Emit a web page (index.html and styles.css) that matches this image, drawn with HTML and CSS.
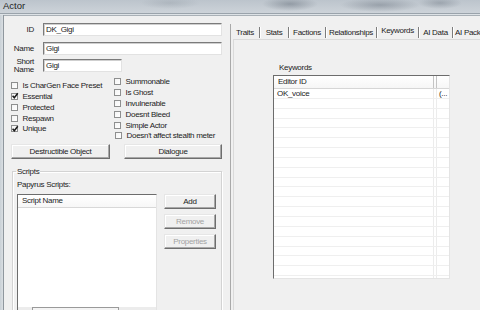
FILE: index.html
```html
<!DOCTYPE html>
<html>
<head>
<meta charset="utf-8">
<link rel="stylesheet" href="styles.css">
</head>
<body>
<div class="window">
  <div class="titlebar"><span class="title">Actor</span></div>
  <div class="frame">
    <div class="frame-edge"></div>
    <div class="client">
      <div class="left">
        <div class="field-row r-id"><span class="lbl">ID</span><div class="edit wide">DK_Gigi</div></div>
        <div class="field-row r-name"><span class="lbl">Name</span><div class="edit wide">Gigi</div></div>
        <div class="field-row r-short"><span class="lbl two">Short<br>Name</span><div class="edit short">Gigi</div></div>
        <div class="checks">
          <div class="col col-a">
            <div class="chk"><span class="box"></span>Is CharGen Face Preset</div>
            <div class="chk"><span class="box"><svg viewBox="0 0 5 5"><path d="M0.5 2.3 L1.9 3.9 L4.8 0.2"/></svg></span>Essential</div>
            <div class="chk"><span class="box"></span>Protected</div>
            <div class="chk"><span class="box"></span>Respawn</div>
            <div class="chk"><span class="box"><svg viewBox="0 0 5 5"><path d="M0.5 2.3 L1.9 3.9 L4.8 0.2"/></svg></span>Unique</div>
          </div>
          <div class="col col-b">
            <div class="chk"><span class="box"></span>Summonable</div>
            <div class="chk"><span class="box"></span>Is Ghost</div>
            <div class="chk"><span class="box"></span>Invulnerable</div>
            <div class="chk"><span class="box"></span>Doesnt Bleed</div>
            <div class="chk"><span class="box"></span>Simple Actor</div>
            <div class="chk shifted"><span class="box"></span>Doesn't affect stealth meter</div>
          </div>
        </div>
        <div class="btn-row">
          <div class="btn b-destr">Destructible Object</div>
          <div class="btn b-dialog">Dialogue</div>
        </div>
        <fieldset class="group">
          <legend>Scripts</legend>
          <div class="pap">Papyrus Scripts:</div>
          <div class="scripts">
            <div class="list slist">
              <div class="lhead"><span class="hcell">Script Name</span></div>
              <div class="lbody"></div>
              <div class="hscroll"><span class="arrow"></span><span class="thumb"></span></div>
            </div>
            <div class="sbtns">
              <div class="btn">Add</div>
              <div class="btn dis">Remove</div>
              <div class="btn dis">Properties</div>
            </div>
          </div>
        </fieldset>
      </div>
      <div class="right">
        <div class="tabctl">
          <div class="tabs">
            <span class="tab t-traits">Traits</span><span class="sep"></span>
            <span class="tab t-stats">Stats</span><span class="sep"></span>
            <span class="tab t-fac">Factions</span><span class="sep"></span>
            <span class="tab t-rel">Relationships</span><span class="sep"></span>
            <span class="tab t-kw active">Keywords</span><span class="sep"></span>
            <span class="tab t-ai">AI Data</span><span class="sep"></span>
            <span class="tab t-pack">AI Pack</span>
          </div>
          <div class="page">
            <div class="kw-label">Keywords</div>
            <div class="list kwlist">
              <div class="krow khead"><span class="c1">Editor ID</span><span class="c2"></span><span class="c3"></span></div>
              <div class="krow"><span class="c1">OK_voice</span><span class="c2"></span><span class="c3">(...</span></div>
              <div class="krow"><span class="c1"></span><span class="c2"></span><span class="c3"></span></div>
              <div class="krow"><span class="c1"></span><span class="c2"></span><span class="c3"></span></div>
              <div class="krow"><span class="c1"></span><span class="c2"></span><span class="c3"></span></div>
              <div class="krow"><span class="c1"></span><span class="c2"></span><span class="c3"></span></div>
              <div class="krow"><span class="c1"></span><span class="c2"></span><span class="c3"></span></div>
              <div class="krow"><span class="c1"></span><span class="c2"></span><span class="c3"></span></div>
              <div class="krow"><span class="c1"></span><span class="c2"></span><span class="c3"></span></div>
              <div class="krow"><span class="c1"></span><span class="c2"></span><span class="c3"></span></div>
              <div class="krow"><span class="c1"></span><span class="c2"></span><span class="c3"></span></div>
              <div class="krow"><span class="c1"></span><span class="c2"></span><span class="c3"></span></div>
              <div class="krow"><span class="c1"></span><span class="c2"></span><span class="c3"></span></div>
              <div class="krow"><span class="c1"></span><span class="c2"></span><span class="c3"></span></div>
              <div class="krow"><span class="c1"></span><span class="c2"></span><span class="c3"></span></div>
              <div class="krow"><span class="c1"></span><span class="c2"></span><span class="c3"></span></div>
              <div class="krow"><span class="c1"></span><span class="c2"></span><span class="c3"></span></div>
              <div class="krow"><span class="c1"></span><span class="c2"></span><span class="c3"></span></div>
              <div class="krow"><span class="c1"></span><span class="c2"></span><span class="c3"></span></div>
              <div class="krow"><span class="c1"></span><span class="c2"></span><span class="c3"></span></div>
              <div class="krow"><span class="c1"></span><span class="c2"></span><span class="c3"></span></div>
            </div>
          </div>
        </div>
      </div>
    </div>
  </div>
</div>
</body>
</html>
```

FILE: styles.css
```css
* { box-sizing: border-box; }
html, body { margin: 0; padding: 0; }
body {
  width: 480px; height: 310px; overflow: hidden;
  background: #f0f0f0;
  font-family: "Liberation Sans", Arial, sans-serif;
  font-size: 8px; letter-spacing: -0.3px; color: #1c1c1c;
}
.window { width: 480px; height: 310px; display: flex; flex-direction: column; overflow: hidden; }

.titlebar {
  height: 14px; flex: none;
  display: flex; align-items: center; padding-left: 3px;
  border-bottom: 1px solid #9aa3ab;
  background:
    radial-gradient(ellipse 28px 7px at 290px 4px, rgba(90,100,112,0.45), rgba(90,100,112,0) 100%),
    radial-gradient(ellipse 40px 7px at 380px 5px, rgba(90,100,112,0.4), rgba(90,100,112,0) 100%),
    radial-gradient(ellipse 22px 6px at 440px 3px, rgba(90,100,112,0.35), rgba(90,100,112,0) 100%),
    radial-gradient(ellipse 30px 6px at 170px 3px, rgba(120,130,140,0.25), rgba(120,130,140,0) 100%),
    linear-gradient(to bottom, #bcc4cc, #cdd3d9);
}
.title { font-size: 9.5px; letter-spacing: 0; color: #1e1e1e; position: relative; top: -1px; }

.frame { flex: 1; display: flex; min-height: 0; border-top: 1px solid #dde2e6; }
.frame-edge {
  width: 4px; flex: none;
  background: linear-gradient(to right, #c9d0d6, #dadfe3 75%, #8f979e 75%);
}
.client { flex: 1; display: flex; min-width: 0; border-top: 1px solid #a9b0b6; }

/* left column */
.left { width: 226px; flex: none; display: flex; flex-direction: column; }
.field-row { display: flex; align-items: center; height: 13px; flex: none; }
.r-id { margin-top: 7px; }
.r-name { margin-top: 6px; }
.r-short { margin-top: 4px; }
.lbl { width: 30px; text-align: right; margin-right: 9px; line-height: 10px; }
.lbl.two { line-height: 8px; }
.edit {
  height: 13px; background: #fff; color: #1c1c1c;
  border: 1px solid; border-color: #7b7b7b #e2e2e2 #e2e2e2 #7b7b7b;
  box-shadow: inset 1px 1px #cfcfcf;
  padding-left: 2px; display: flex; align-items: center;
}
.edit.wide { width: 179px; }
.edit.short { width: 79px; }

.checks { display: flex; margin-top: 4.6px; flex: none; }
.col { display: flex; flex-direction: column; }
.col-a { width: 103px; margin-left: 7px; padding-top: 3.7px; }
.chk { height: 10.8px; display: flex; align-items: center; white-space: nowrap; }
.chk.shifted { padding-left: 1px; }
.box {
  width: 7px; height: 7px; flex: none; margin-right: 4.5px;
  border: 1px solid #8e8f8f; background: linear-gradient(135deg, #f4f4f4, #fff);
  display: flex; align-items: center; justify-content: center;
}
.box svg { width: 6px; height: 6px; overflow: visible; }
.box path { fill: none; stroke: #1b1b1b; stroke-width: 1.3; }

.btn-row { display: flex; margin-top: 2.6px; margin-left: 7px; gap: 14px; flex: none; }
.btn {
  height: 15px; display: flex; align-items: center; justify-content: center;
  background: #f0f0f0; color: #1c1c1c;
  border: 1px solid; border-color: #e6e6e6 #6e6e6e #6e6e6e #e6e6e6;
  box-shadow: inset -1px -1px #a8a8a8, inset 1px 1px #fff;
  white-space: nowrap;
}
.btn.dis { color: #a3a3a3; }
.b-destr { width: 99px; }
.b-dialog { width: 98px; }

.group {
  margin: 8px 0 0 8px; width: 210px; height: 160px; flex: none;
  border: 1px solid #d3d3d3; box-shadow: inset 1px 1px #fff, 1px 1px #fff;
  padding: 0 3px 0 4px; min-width: 0;
}
.group legend { padding: 0 1px; margin-left: -1px; line-height: 10px; color: #1c1c1c; }
.pap { margin-top: 3px; line-height: 10px; }
.scripts { display: flex; margin-top: 4px; }
.list {
  background: #fff; color: #1c1c1c;
  border: 1px solid; border-color: #6c6c6c #e4e4e4 #e4e4e4 #6c6c6c;
  overflow: hidden;
}
.slist { width: 140px; height: 122px; display: flex; flex-direction: column; }
.lhead {
  height: 13px; flex: none; display: flex; align-items: center;
  border-bottom: 1px solid #d8d8d8; background: linear-gradient(#fff, #f7f7f7);
}
.hcell { padding-left: 4px; }
.lbody { flex: 1; }
.hscroll { height: 8px; flex: none; display: flex; background: #ececec; }
.hscroll .arrow { width: 14px; }
.hscroll .thumb { width: 87px; border: 1px solid #9a9a9a; background: #f4f4f4; }
.sbtns { width: 52px; margin-left: 7px; display: flex; flex-direction: column; gap: 5px; }

/* right: tab control */
.right { flex: 1; min-width: 0; padding-top: 8px; display: flex; overflow: hidden; }
.tabctl { flex: 1; min-width: 0; border-left: 1px solid #a9a9a9; display: flex; flex-direction: column; }
.tabs { height: 15px; display: flex; align-items: center; flex: none; white-space: nowrap; overflow: hidden; }
.tab { text-align: center; line-height: 10px; position: relative; top: 1px; flex: none; color: #1c1c1c; }
.tab.active { top: -1px; }
.t-traits { width: 28px; }
.t-stats { width: 28px; }
.t-fac { width: 36px; }
.t-rel { width: 50px; }
.t-kw { width: 41px; }
.t-ai { width: 33px; }
.t-pack { width: 28px; text-align: left; padding-left: 2px; }
.sep { width: 1px; height: 11px; flex: none; background: #7c7c7c; box-shadow: 1px 0 #fff; position: relative; top: 1px; }
.page { flex: 1; margin-left: 2px; border-top: 1px solid #dadada; border-left: 1px solid #dadada; }
.kw-label { margin: 23px 0 0 45px; line-height: 10px; }
.kwlist { margin: 2px 0 0 39px; width: 177px; height: 204px; }
.krow {
  display: grid; grid-template-columns: 160px 3px 1fr;
  height: 9.85px; border-bottom: 1px solid #efefef; line-height: 9px;
}
.krow > span { border-right: 1px solid #ececec; white-space: nowrap; overflow: hidden; color: #1c1c1c; }
.krow > .c3 { border-right: none; padding-left: 2px; }
.krow .c1 { padding-left: 3px; }
.khead { height: 13px; line-height: 12px; border-bottom: 1px solid #d6d6d6; background: linear-gradient(#fff, #f6f6f6); }
.khead > span { border-right: 1px solid #c4c4c4; }
.khead .c1 { padding-left: 4px; }
```
